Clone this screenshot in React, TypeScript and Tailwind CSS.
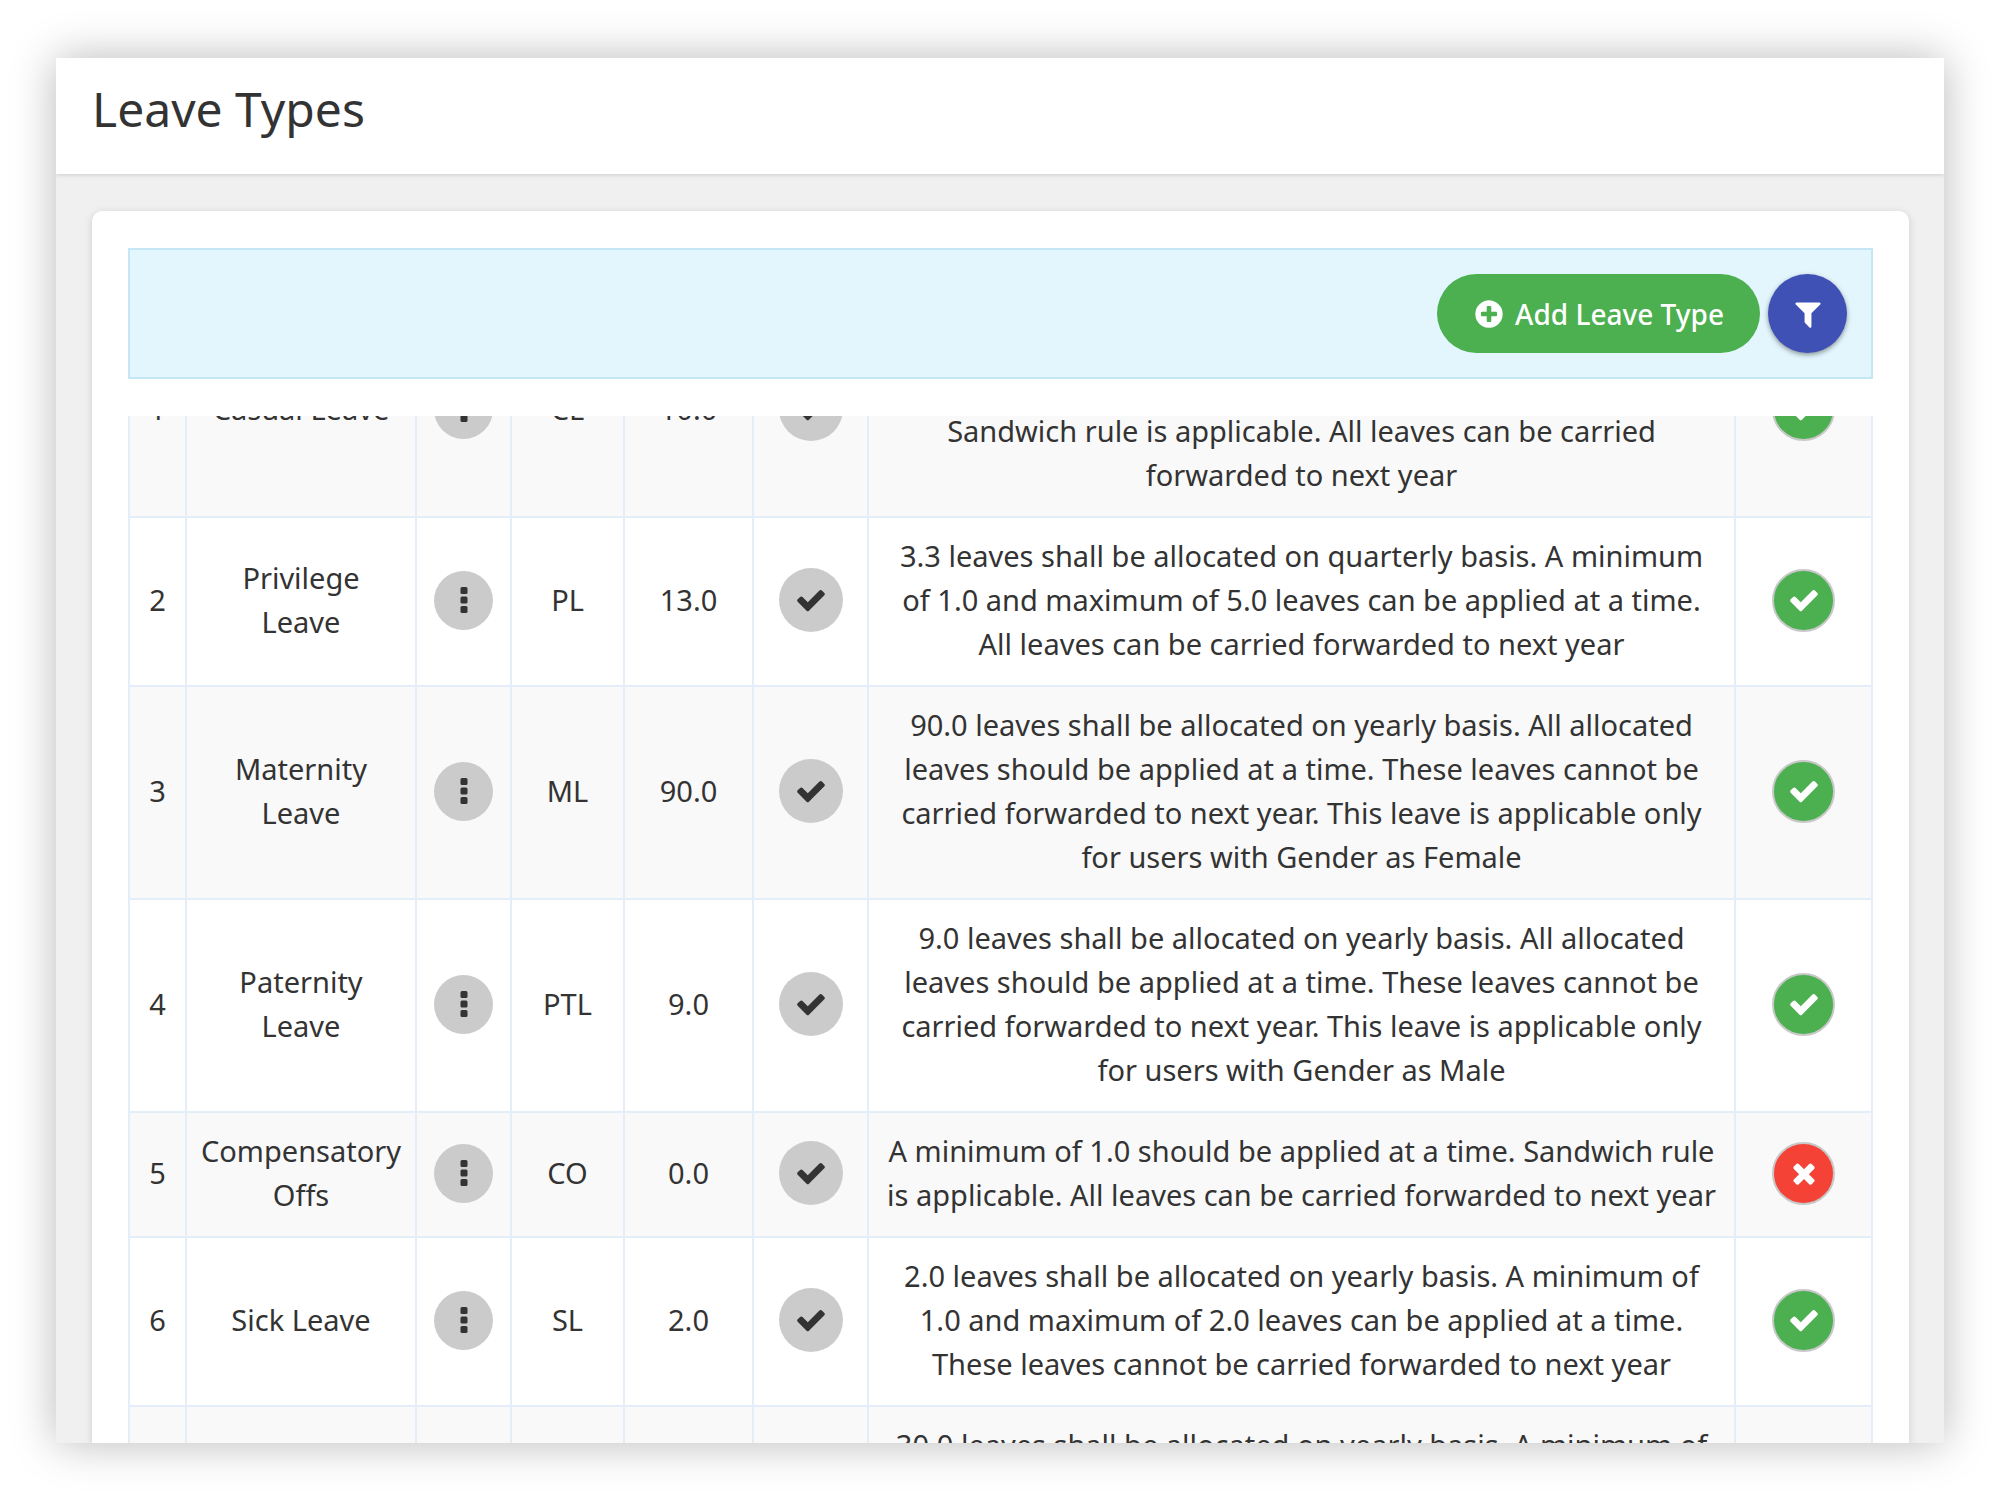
import { useLayoutEffect, useRef } from "react";
import clsx from "clsx";

type LeaveType = {
  id: number;
  name: string;
  code: string;
  total: string;
  description: string;
  active: boolean;
};

const leaveTypes: LeaveType[] = [
  {
    id: 1,
    name: "Casual Leave",
    code: "CL",
    total: "10.0",
    description:
      "10.0 leaves shall be allocated on yearly basis. A minimum\nof 1.0 and maximum of 3.0 leaves can be applied at a time.\nSandwich rule is applicable. All leaves can be carried\nforwarded to next year",
    active: true,
  },
  {
    id: 2,
    name: "Privilege\nLeave",
    code: "PL",
    total: "13.0",
    description:
      "3.3 leaves shall be allocated on quarterly basis. A minimum\nof 1.0 and maximum of 5.0 leaves can be applied at a time.\nAll leaves can be carried forwarded to next year",
    active: true,
  },
  {
    id: 3,
    name: "Maternity\nLeave",
    code: "ML",
    total: "90.0",
    description:
      "90.0 leaves shall be allocated on yearly basis. All allocated\nleaves should be applied at a time. These leaves cannot be\ncarried forwarded to next year. This leave is applicable only\nfor users with Gender as Female",
    active: true,
  },
  {
    id: 4,
    name: "Paternity\nLeave",
    code: "PTL",
    total: "9.0",
    description:
      "9.0 leaves shall be allocated on yearly basis. All allocated\nleaves should be applied at a time. These leaves cannot be\ncarried forwarded to next year. This leave is applicable only\nfor users with Gender as Male",
    active: true,
  },
  {
    id: 5,
    name: "Compensatory\nOffs",
    code: "CO",
    total: "0.0",
    description:
      "A minimum of 1.0 should be applied at a time. Sandwich rule\nis applicable. All leaves can be carried forwarded to next year",
    active: false,
  },
  {
    id: 6,
    name: "Sick Leave",
    code: "SL",
    total: "2.0",
    description:
      "2.0 leaves shall be allocated on yearly basis. A minimum of\n1.0 and maximum of 2.0 leaves can be applied at a time.\nThese leaves cannot be carried forwarded to next year",
    active: true,
  },
  {
    id: 7,
    name: "Study Leave",
    code: "STL",
    total: "30.0",
    description:
      "30.0 leaves shall be allocated on yearly basis. A minimum of\n1.0 and maximum of 30.0 leaves can be applied at a time.\nThese leaves cannot be carried forwarded to next year",
    active: true,
  },
];

const icons = {
  check:
    "M1671 566q0 40-28 68l-724 724-136 136q-28 28-68 28t-68-28l-136-136-362-362q-28-28-28-68t28-68l136-136q28-28 68-28t68 28l294 295 656-657q28-28 68-28t68 28l136 136q28 28 28 68z",
  times:
    "M1490 1322q0 40-28 68l-136 136q-28 28-68 28t-68-28l-294-294-294 294q-28 28-68 28t-68-28l-136-136q-28-28-28-68t28-68l294-294-294-294q-28-28-28-68t28-68l136-136q28-28 68-28t68 28l294 294 294-294q28-28 68-28t68 28l136 136q28 28 28 68t-28 68l-294 294 294 294q28 28 28 68z",
  plus: "M1344 960v-128q0-26-19-45t-45-19h-256v-256q0-26-19-45t-45-19h-128q-26 0-45 19t-19 45v256h-256q-26 0-45 19t-19 45v128q0 26 19 45t45 19h256v256q0 26 19 45t45 19h128q26 0 45-19t19-45v-256h256q26 0 45-19t19-45zm320-64q0 209-103 385.500t-279.500 279.500-385.500 103-385.500-103-279.500-279.500-103-385.500 103-385.500 279.500-279.500 385.500-103 385.500 103 279.500 279.500 103 385.500z",
  filter:
    "M1595 295q17 41-14 70l-493 493v742q0 42-39 59-13 5-25 5-27 0-45-19l-256-256q-19-19-19-45v-486l-493-493q-31-29-14-70 17-39 59-39h1280q42 0 59 39z",
};

function Icon({ name }: { name: keyof typeof icons }) {
  return (
    <svg viewBox="0 0 1792 1792" className="size-8 shrink-0" fill="currentColor" aria-hidden="true">
      <path d={icons[name]} />
    </svg>
  );
}

function DotsIcon() {
  return (
    <svg viewBox="0 0 8 26" className="h-[26px] w-2" fill="currentColor" aria-hidden="true">
      <rect x="0.5" y="0" width="7" height="7" rx="1.5" />
      <rect x="0.5" y="9.5" width="7" height="7" rx="1.5" />
      <rect x="0.5" y="19" width="7" height="7" rx="1.5" />
    </svg>
  );
}

function Cell({ children }: { children: React.ReactNode }) {
  return (
    <td className="whitespace-pre border-2 border-[#e3eef9] px-0 pt-4 pb-[19px] text-center align-middle">
      {children}
    </td>
  );
}

export default function App() {
  const scroller = useRef<HTMLDivElement>(null);

  // Open the list with the first row partly scrolled away
  useLayoutEffect(() => {
    if (scroller.current) scroller.current.scrollTop = 113;
  }, []);

  return (
    <div className="h-screen bg-white px-14 pt-[58px] pb-[62px] font-['Noto_Sans',sans-serif] text-[#333]">
      <div className="flex h-full flex-col overflow-hidden bg-[#f0f0f0] shadow-[0_0_42px_rgba(0,0,0,0.28)]">
        <header className="relative flex h-[116px] shrink-0 items-center bg-white px-9 pb-3.5 shadow-[0_1px_4px_rgba(0,0,0,0.15)]">
          <h1 className="text-[48px] leading-[60px]">Leave Types</h1>
        </header>

        <main className="mr-[35px] ml-9 mt-[37px] flex min-h-0 flex-1 flex-col rounded-t-[10px] bg-white px-9 pt-[37px] shadow-[0_2px_8px_rgba(0,0,0,0.15)]">
          <div className="flex shrink-0 items-center justify-end gap-2 border-2 border-[#c5e6f5] bg-[#e3f6fe] p-6">
            <button
              type="button"
              className="flex h-[79px] items-center gap-2.5 rounded-full bg-[#4caf50] px-9 text-[28px] leading-[44px] font-medium text-white"
            >
              <Icon name="plus" />
              Add Leave Type
            </button>
            <button
              type="button"
              aria-label="Filter"
              className="flex size-[79px] items-center justify-center rounded-full bg-[#3f51b5] text-white shadow-[0_2px_5px_rgba(0,0,0,0.4)]"
            >
              <Icon name="filter" />
            </button>
          </div>

          <div ref={scroller} className="mt-[37px] min-h-0 flex-1 overflow-y-auto [scrollbar-width:none]">
            <table className="w-full table-fixed border-collapse text-[29px] leading-[44px]">
              <colgroup>
                <col className="w-[57px]" />
                <col className="w-[230px]" />
                <col className="w-[95px]" />
                <col className="w-[113px]" />
                <col className="w-[129px]" />
                <col className="w-[115px]" />
                <col />
                <col className="w-[137px]" />
              </colgroup>
              <tbody>
                {leaveTypes.map((leave) => (
                  <tr key={leave.id} className="odd:bg-[#f9f9f9]">
                    <Cell>{leave.id}</Cell>
                    <Cell>{leave.name}</Cell>
                    <Cell>
                      <button
                        type="button"
                        aria-label="Actions"
                        className="mx-auto flex size-[59px] items-center justify-center rounded-full bg-[#cbcbcb]"
                      >
                        <DotsIcon />
                      </button>
                    </Cell>
                    <Cell>{leave.code}</Cell>
                    <Cell>{leave.total}</Cell>
                    <Cell>
                      <span className="mx-auto flex size-16 items-center justify-center rounded-full bg-[#cbcbcb]">
                        <Icon name="check" />
                      </span>
                    </Cell>
                    <Cell>{leave.description}</Cell>
                    <Cell>
                      <button
                        type="button"
                        aria-label={leave.active ? "Active" : "Inactive"}
                        className={clsx(
                          "mx-auto flex size-[63px] items-center justify-center rounded-full border-2 border-[#c8c8c8] text-white",
                          leave.active ? "bg-[#4caf50]" : "bg-[#f44336]"
                        )}
                      >
                        <Icon name={leave.active ? "check" : "times"} />
                      </button>
                    </Cell>
                  </tr>
                ))}
              </tbody>
            </table>
          </div>
        </main>
      </div>
    </div>
  );
}
